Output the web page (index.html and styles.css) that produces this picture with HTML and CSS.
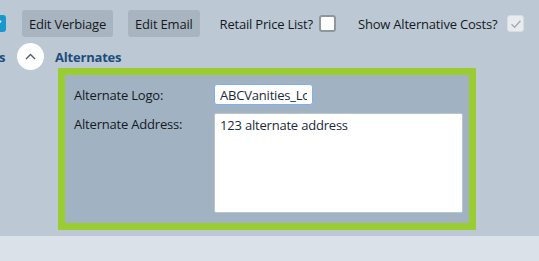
FILE: index.html
```html
<!DOCTYPE html>
<html>

<head>
    <title>Alternates</title>
    <link rel="stylesheet" href="styles.css">
</head>

<body>
    <div class="page">
        <div class="toolbar">
            <span class="check check-on">
                <svg width="11" height="11" viewBox="0 0 11 11"><path d="M2 5.8 L4.4 8.2 L9 2.8" fill="none" stroke="#fff" stroke-width="1.8"/></svg>
            </span>
            <button class="btn">Edit Verbiage</button>
            <button class="btn">Edit Email</button>
            <label class="opt">Retail Price List? <span class="check"></span></label>
            <label class="opt">Show Alternative Costs?
                <span class="check check-off">
                    <svg width="12" height="12" viewBox="0 0 12 12"><path d="M1.5 6.2 L4.6 9.2 L10.5 2.8" fill="none" stroke="#a3abb3" stroke-width="1.4"/></svg>
                </span>
            </label>
        </div>

        <div class="section-head">
            <span class="cut">s</span>
            <span class="toggle">
                <svg width="11" height="7" viewBox="0 0 11 7"><path d="M1 6 L5.5 1.5 L10 6" fill="none" stroke="#555b61" stroke-width="1.4"/></svg>
            </span>
            <span class="section-title">Alternates</span>
        </div>

        <div class="panel">
            <div class="field">
                <div class="label">Alternate Logo:</div>
                <input class="logo-input" type="text" value="ABCVanities_Logo.png">
            </div>
            <div class="field">
                <div class="label">Alternate Address:</div>
                <textarea class="address">123 alternate address</textarea>
            </div>
        </div>
    </div>

    <div class="footer"></div>
</body>

</html>
```

FILE: styles.css
```css
body {
    margin: 0;
    background-color: #bcc9d4;
    font-family: "Open Sans", sans-serif;
    font-size: 13px;
    letter-spacing: -0.2px;
    color: #15191e;
    overflow: hidden;
}

.page {
    height: 236px;
}

.toolbar {
    display: flex;
    align-items: center;
    margin-left: -11px;
    padding-top: 10px;
    height: 27px;
    white-space: nowrap;
}

.toolbar > * {
    flex-shrink: 0;
}

.check {
    display: inline-flex;
    align-items: center;
    justify-content: center;
    box-sizing: border-box;
    width: 17px;
    height: 17px;
    border: 2px solid #8e979f;
    border-radius: 3px;
    background-color: #fff;
    vertical-align: middle;
    flex-shrink: 0;
}

.check-on {
    background-color: #1799cf;
    border-color: #1799cf;
    margin-right: 16px;
}

.check-off {
    background-color: #e9ecef;
    border: 1px solid #d8dde2;
    margin-left: 4px;
}

.btn {
    height: 27px;
    padding: 0 7px;
    border: none;
    border-radius: 3px;
    background-color: #a8b5c0;
    font-family: inherit;
    font-size: inherit;
    letter-spacing: inherit;
    color: #15191e;
    margin-right: 15px;
}

.opt {
    display: inline-flex;
    align-items: center;
    gap: 6px;
    margin-left: 5px;
    margin-right: 17px;
}

.section-head {
    display: flex;
    align-items: center;
    margin-left: -1px;
    margin-top: 6px;
    height: 27px;
}

.cut {
    font-weight: bold;
    color: #1d4d7a;
    width: 18px;
}

.toggle {
    display: inline-flex;
    align-items: center;
    justify-content: center;
    width: 27px;
    height: 27px;
    border-radius: 50%;
    background-color: #fff;
    margin-right: 11px;
}

.section-title {
    font-weight: bold;
    color: #1d4d7a;
}

.panel {
    box-sizing: border-box;
    width: 418px;
    height: 162px;
    margin: -2px 0 0 58px;
    border: 7px solid #9acd32;
    background-color: #a1b3c3;
    padding: 9px 6px 10px 9px;
}

.field {
    display: flex;
    align-items: flex-start;
    margin-bottom: 8px;
}

.label {
    width: 140px;
    padding-top: 2px;
}

.logo-input {
    box-sizing: border-box;
    width: 99px;
    height: 21px;
    padding: 0 5px;
    border: 1px solid #7fb0ee;
    border-radius: 3px;
    font-family: inherit;
    font-size: inherit;
    letter-spacing: inherit;
    color: #1b2a3b;
    outline: none;
}

.address {
    box-sizing: border-box;
    width: 249px;
    height: 100px;
    padding: 2px 5px;
    border: 1px solid #b9c6d2;
    border-radius: 2px;
    font-family: inherit;
    font-size: inherit;
    letter-spacing: inherit;
    color: #1b2a3b;
    resize: none;
}

.footer {
    height: 25px;
    background-color: #dae1e8;
}
```
